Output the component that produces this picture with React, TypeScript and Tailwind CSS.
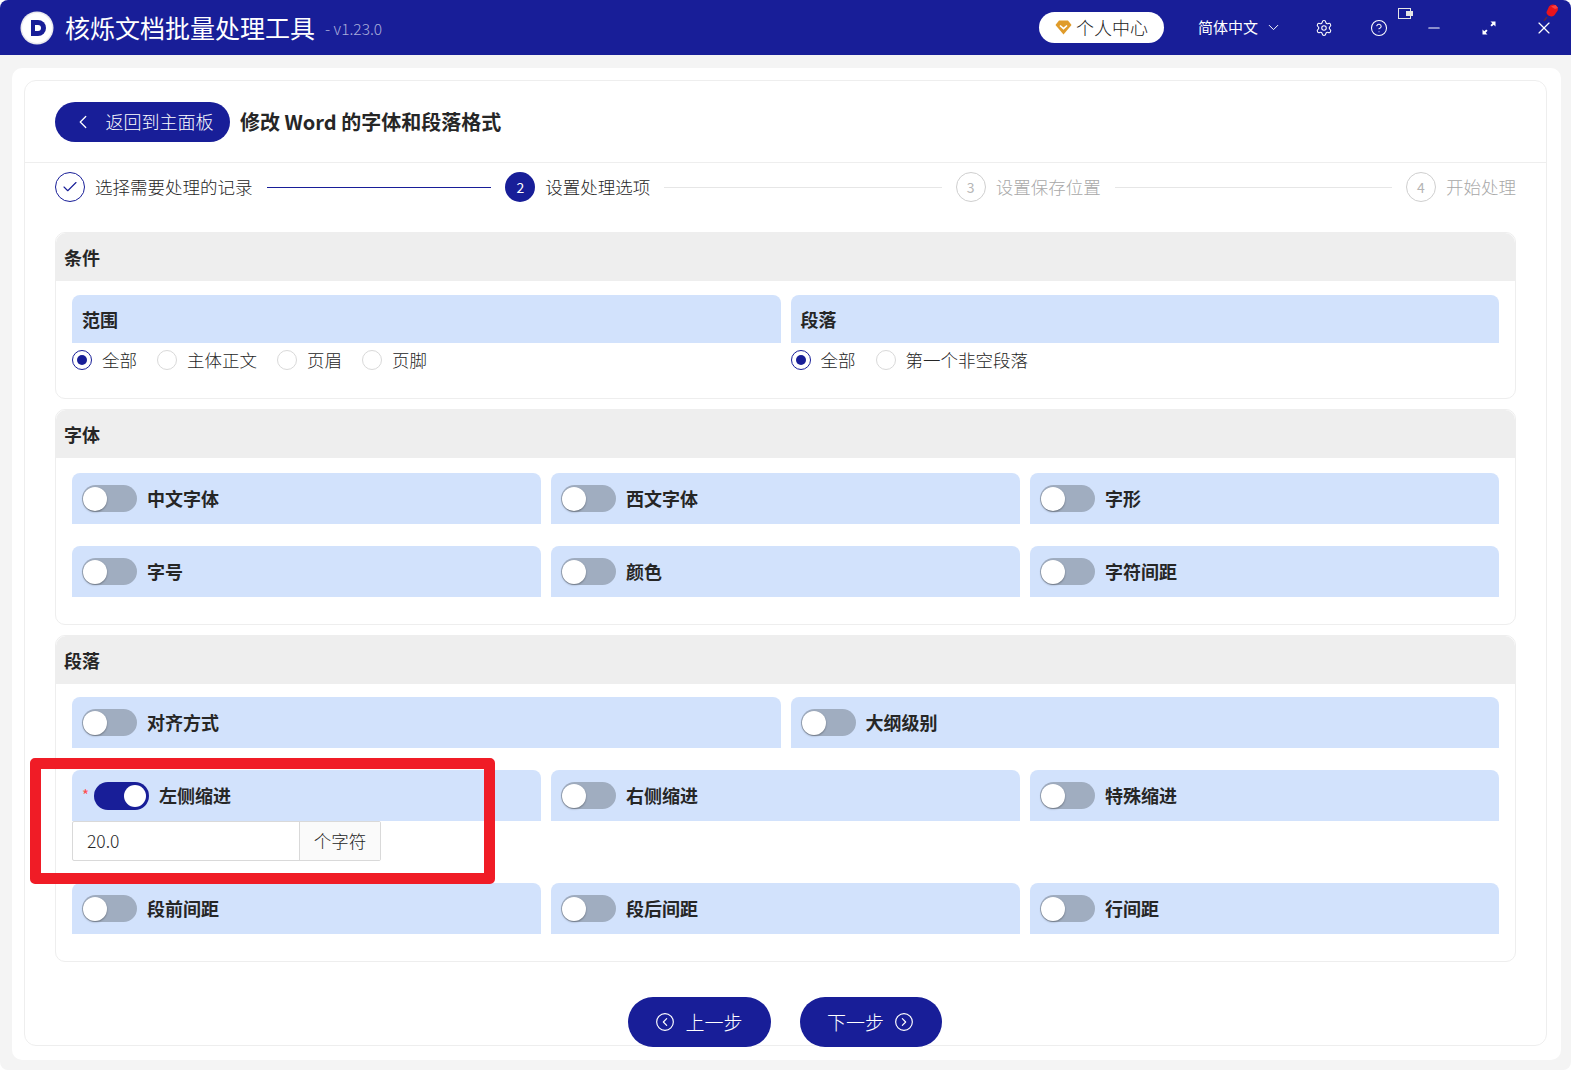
import React from "react";
import { Check, ChevronDown, ChevronLeft, CircleChevronLeft, CircleChevronRight, CircleHelp, Minus, Settings, X } from "lucide-react";

function Toggle({ on = false }: { on?: boolean }) {
  return on ? (
    <span className="flex h-[28px] w-[55px] shrink-0 items-center justify-end rounded-full bg-[#181e98] pr-[3px]">
      <span className="h-[22px] w-[22px] rounded-full bg-white" />
    </span>
  ) : (
    <span className="flex h-[27px] w-[55px] shrink-0 items-center rounded-full bg-[#a0adc0] pl-[1px]">
      <span className="h-[24px] w-[24px] rounded-full bg-white shadow-[0_1px_2px_rgba(0,0,0,0.35)]" />
    </span>
  );
}

function Row({ label }: { label: string }) {
  return (
    <div className="flex h-[51px] items-center gap-[10px] rounded-t-[8px] bg-[#d2e2fc] pl-[10px] text-[18px] font-bold text-[#262626]">
      <Toggle />
      <span>{label}</span>
    </div>
  );
}

function Radio({ label, on = false }: { label: string; on?: boolean }) {
  return (
    <div className="mr-[20px] flex items-center gap-[10px]">
      {on ? (
        <span className="flex h-[20px] w-[20px] items-center justify-center rounded-full border border-[#181e98]">
          <span className="h-[10px] w-[10px] rounded-full bg-[#181e98]" />
        </span>
      ) : (
        <span className="h-[20px] w-[20px] rounded-full border border-[#d9d9d9]" />
      )}
      <span className="text-[17.5px] font-light text-[#262626]">{label}</span>
    </div>
  );
}

function SectionHead({ title }: { title: string }) {
  return (
    <div className="flex h-[48px] items-center rounded-t-[10px] bg-[#eeeeee] pl-[8px] text-[18px] font-bold text-[#262626]">
      {title}
    </div>
  );
}

function CondBlock({ title, children }: { title: string; children: React.ReactNode }) {
  return (
    <div>
      <div className="flex h-[48px] items-center rounded-t-[8px] bg-[#d2e2fc] pl-[10px] text-[18px] font-bold text-[#262626]">
        {title}
      </div>
      <div className="mt-[4px] flex items-center">{children}</div>
    </div>
  );
}

function Step({ n, label, state, last = false }: { n: string; label: string; state: "done" | "active" | "wait"; last?: boolean }) {
  return (
    <div className={last ? "flex items-center" : "flex flex-1 items-center"}>
      {state === "done" && (
        <span className="flex h-[30px] w-[30px] items-center justify-center rounded-full border border-[#181e98] text-[#181e98]">
          <Check size={18} strokeWidth={1.5} />
        </span>
      )}
      {state === "active" && (
        <span className="flex h-[30px] w-[30px] items-center justify-center rounded-full bg-[#181e98] text-[14px] text-white">{n}</span>
      )}
      {state === "wait" && (
        <span className="flex h-[30px] w-[30px] items-center justify-center rounded-full border border-[#cfcfcf] text-[14px] text-[#b5b5b5]">{n}</span>
      )}
      <span className={"ml-[10px] text-[17.5px] font-light whitespace-nowrap " + (state === "wait" ? "text-[#a8a8a8]" : "text-[#262626]")}>{label}</span>
      {!last && <span className={"mx-[14px] h-px flex-1 " + (state === "done" ? "bg-[#181e98]" : "bg-[#e6e6e6]")} />}
    </div>
  );
}

function Logo() {
  return (
    <svg width="36" height="36" viewBox="0 0 36 36" className="shrink-0">
      <circle cx="18" cy="18" r="16.5" fill="#e9e9ee" />
      <path d="M3 18a15 15 0 0 1 30 0a15 15 0 0 1-30 0z" fill="#ffffff" />
      <path d="M12 10h7a8 8 0 0 1 0 16h-7z" fill="#181e98" />
      <path d="M16 15h3a3 3 0 0 1 0 6h-3z" fill="#ffffff" />
    </svg>
  );
}

export default function App() {
  return (
    <div className="relative flex h-[1070px] w-full flex-col overflow-hidden rounded-[8px] bg-white font-['Noto_Sans_CJK_SC','Noto_Sans',sans-serif]">
      <header className="flex h-[55px] shrink-0 items-center bg-[#181e98] pl-[19px] text-white">
        <Logo />
        <span className="ml-[10px] text-[25px] leading-none">核烁文档批量处理工具</span>
        <span className="ml-[10px] mt-[3px] text-[15.5px] font-light text-[#a9addb]">- v1.23.0</span>
        <div className="ml-auto flex h-[31px] w-[125px] items-center justify-center gap-[4px] rounded-full bg-white text-[18px] font-light text-[#222]">
          <svg width="17" height="15" viewBox="0 0 17 15">
            <path d="M4 0.5h9l3.5 4.5-8 9.5-8-9.5z" fill="#df9b2a" />
            <path d="M5 5.5l3.5 3.2 3.5-3.2" fill="none" stroke="#fff" strokeWidth="1.6" />
          </svg>
          <span>个人中心</span>
        </div>
        <span className="ml-[34px] text-[15px]">简体中文</span>
        <ChevronDown className="ml-[7px]" size={17} strokeWidth={1.4} />
        <Settings className="ml-[33px]" size={18} strokeWidth={1.4} />
        <CircleHelp className="ml-[37px]" size={18} strokeWidth={1.4} />
        <Minus className="ml-[37px]" size={18} strokeWidth={1.4} />
        <svg className="ml-[38px]" width="16" height="16" viewBox="0 0 16 16" fill="white">
          <path d="M9.5 1.5h5v5l-1.8-1.8-1.9 1.9-1.4-1.4 1.9-1.9z" />
          <path d="M6.5 14.5h-5v-5l1.8 1.8 1.9-1.9 1.4 1.4-1.9 1.9z" />
        </svg>
        <X className="ml-[37px] mr-[17px]" size={20} strokeWidth={1.4} />
      </header>

      <main className="flex flex-1 flex-col bg-[#f4f4f4] pt-[13px] pr-[10px] pb-[10px] pl-[12px]">
        <div className="flex flex-1 flex-col rounded-[10px] bg-white pt-[12px] pr-[14px] pb-[14px] pl-[12px]">
          <div className="flex h-[966px] flex-col rounded-[12px] border border-[#eeeeee]">
            <div className="flex h-[82px] shrink-0 items-center gap-[10px] border-b border-[#eeeeee] pl-[30px]">
              <button className="flex h-[40px] w-[175px] items-center justify-center gap-[12px] rounded-full bg-[#181e98] text-[18px] font-light text-white">
                <ChevronLeft size={22} strokeWidth={1.4} />
                <span>返回到主面板</span>
              </button>
              <h1 className="text-[20px] font-bold text-[#262626]">修改 Word 的字体和段落格式</h1>
            </div>

            <div className="flex pt-[9px] pr-[30px] pl-[30px]">
              <Step n="1" label="选择需要处理的记录" state="done" />
              <Step n="2" label="设置处理选项" state="active" />
              <Step n="3" label="设置保存位置" state="wait" />
              <Step n="4" label="开始处理" state="wait" last />
            </div>

            <div className="mx-[30px] mt-[30px] flex flex-col gap-[10px]">
              <section className="h-[167px] rounded-[10px] border border-[#eeeeee]">
                <SectionHead title="条件" />
                <div className="mt-[14px] grid grid-cols-2 gap-[10px] px-[16px]">
                  <CondBlock title="范围">
                    <Radio label="全部" on />
                    <Radio label="主体正文" />
                    <Radio label="页眉" />
                    <Radio label="页脚" />
                  </CondBlock>
                  <CondBlock title="段落">
                    <Radio label="全部" on />
                    <Radio label="第一个非空段落" />
                  </CondBlock>
                </div>
              </section>

              <section className="h-[216px] rounded-[10px] border border-[#eeeeee]">
                <SectionHead title="字体" />
                <div className="mt-[15px] grid grid-cols-3 gap-x-[10px] gap-y-[22px] px-[16px]">
                  {["中文字体", "西文字体", "字形", "字号", "颜色", "字符间距"].map((t) => (
                    <Row key={t} label={t} />
                  ))}
                </div>
              </section>

              <section className="h-[327px] rounded-[10px] border border-[#eeeeee]">
                <SectionHead title="段落" />
                <div className="mt-[13px] flex flex-col gap-[22px] px-[16px]">
                  <div className="grid grid-cols-2 gap-x-[10px]">
                    <Row label="对齐方式" />
                    <Row label="大纲级别" />
                  </div>
                  <div className="grid grid-cols-3 gap-x-[10px] gap-y-[22px]">
                    <div>
                      <div className="flex h-[51px] items-center rounded-t-[8px] bg-[#d2e2fc] pl-[10px] text-[18px] font-bold text-[#262626]">
                        <span className="mr-[5px] text-[15px] font-normal text-[#ff4d4f]">*</span>
                        <Toggle on />
                        <span className="ml-[10px]">左侧缩进</span>
                      </div>
                      <div className="flex h-[40px] w-[309px] rounded-[2px] border border-[#d9d9d9] bg-white text-[17.5px] font-light text-[#262626]">
                        <span className="flex w-[226px] items-center pl-[14px]">20.0</span>
                        <span className="flex flex-1 items-center justify-center border-l border-[#d9d9d9] bg-[#fafafa]">个字符</span>
                      </div>
                    </div>
                    <Row label="右侧缩进" />
                    <Row label="特殊缩进" />
                    <Row label="段前间距" />
                    <Row label="段后间距" />
                    <Row label="行间距" />
                  </div>
                </div>
              </section>
            </div>

            <div className="mt-[35px] flex justify-center gap-[29px] pr-[2px]">
              <button className="flex h-[50px] w-[143px] items-center justify-center gap-[10px] rounded-full bg-[#181e98] text-[19px] font-light text-white">
                <CircleChevronLeft size={20} strokeWidth={1.4} />
                <span>上一步</span>
              </button>
              <button className="flex h-[50px] w-[142px] items-center justify-center gap-[10px] rounded-full bg-[#181e98] text-[19px] font-light text-white">
                <span>下一步</span>
                <CircleChevronRight size={20} strokeWidth={1.4} />
              </button>
            </div>
          </div>
        </div>
      </main>

      {/* Annotation drawn over the screenshot */}
      <div className="absolute top-[758px] left-[30px] h-[126px] w-[465px] rounded-[5px] border-[11px] border-[#f01c26]" />
      {/* Floating desktop widgets over the title bar */}
      <svg className="absolute top-[8px] left-[1398px]" width="16" height="11" viewBox="0 0 16 11">
        <rect x="0.5" y="0.5" width="12" height="10" fill="#181e98" stroke="#e5e5e5" />
        <rect x="8" y="3" width="7" height="5" fill="#e5e5e5" />
      </svg>
      <svg className="absolute top-[4px] left-[1541px]" width="19" height="19" viewBox="0 0 19 19">
        <path d="M8 2.5a5 5 0 0 1 9 2.5c0 2.5-2 3.2-3 5.5-1.2 2-3.5 2.5-5.5 1.5S4.500 9 6 7z" fill="#e8141c" />
        <path d="M10 2.500l4.500-1.500 2.500 3-3 1z" fill="#f84040" />
        <path d="M6 13l-3 4" stroke="#6d2b2b" strokeWidth="1.2" />
      </svg>
    </div>
  );
}
